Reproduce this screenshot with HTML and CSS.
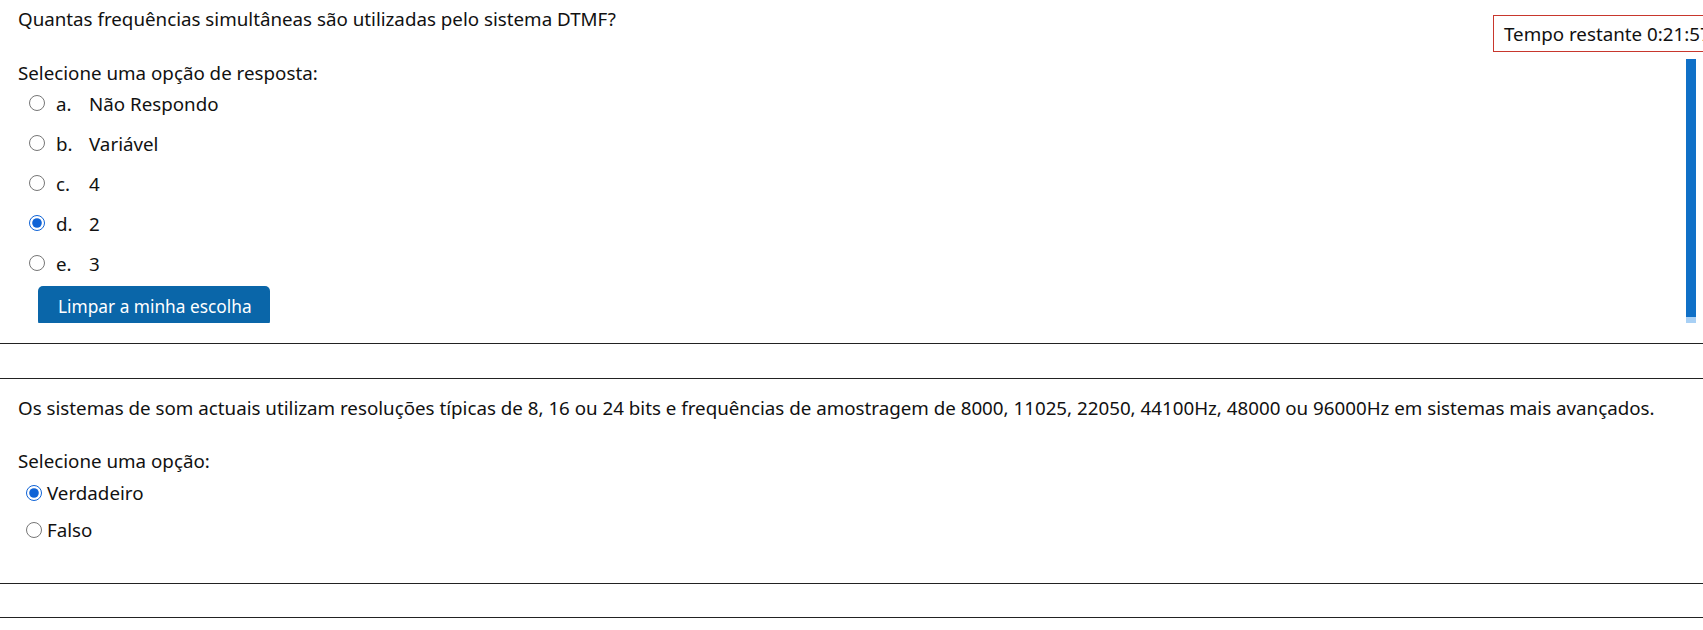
FILE: index.html
```html
<!DOCTYPE html>
<html lang="pt">
<head>
<meta charset="utf-8">
<title>Questionário</title>
<link rel="stylesheet" href="styles.css">
</head>
<body>
<div class="timer">Tempo restante 0:21:57</div>

<section class="que que-first">
  <div class="que-frame">
    <div class="que-content">
      <div class="qtext">Quantas frequências simultâneas são utilizadas pelo sistema DTMF?</div>
      <div class="prompt">Selecione uma opção de resposta:</div>
      <div class="answers">
        <label class="opt"><input type="radio" name="q1"><span class="num">a.</span><span>Não Respondo</span></label>
        <label class="opt"><input type="radio" name="q1"><span class="num">b.</span><span>Variável</span></label>
        <label class="opt"><input type="radio" name="q1"><span class="num">c.</span><span>4</span></label>
        <label class="opt"><input type="radio" name="q1" checked><span class="num">d.</span><span>2</span></label>
        <label class="opt"><input type="radio" name="q1"><span class="num">e.</span><span>3</span></label>
      </div>
      <button class="btn-clear" type="button">Limpar a minha escolha</button>
    </div>
    <div class="scrollbar"><div class="thumb"></div></div>
  </div>
</section>

<section class="que que-second">
  <div class="qtext">Os sistemas de som actuais utilizam resoluções típicas de 8, 16 ou 24 bits e frequências de amostragem de 8000, 11025, 22050, 44100Hz, 48000 ou 96000Hz em sistemas mais avançados.</div>
  <div class="prompt">Selecione uma opção:</div>
  <div class="answers">
    <label class="opt2"><input type="radio" name="q2" checked><span>Verdadeiro</span></label>
    <label class="opt2"><input type="radio" name="q2"><span>Falso</span></label>
  </div>
</section>

<section class="que que-third"></section>
</body>
</html>
```

FILE: styles.css
```css
html, body {
  margin: 0;
  padding: 0;
  overflow: hidden;
  background: #fff;
}

body {
  font-family: "Noto Sans", "Open Sans", sans-serif;
  font-size: 18.75px;
  line-height: 27px;
  color: #111;
  position: relative;
  width: 1703px;
  height: 630px;
}

.timer {
  position: absolute;
  top: 15px;
  left: 1493px;
  padding: 4px 10px;
  border: 1px solid #c8372d;
  background: #fff;
  white-space: nowrap;
}

.que-first {
  padding-bottom: 20px;
  border-bottom: 1px solid #222;
}

.que-frame {
  height: 323px;
  overflow: hidden;
  display: flex;
}

.que-content {
  flex: 1;
  padding: 4.5px 0 0 18px;
}

.qtext {
  margin-bottom: 27px;
}

.opt {
  display: flex;
  align-items: center;
  padding: 4px 0 9px 0;
}

.opt input {
  width: 16px;
  height: 16px;
  margin: 0 11.5px 0 10.5px;
  accent-color: #0f63d6;
}

.num {
  width: 33px;
}

.btn-clear {
  margin: 0.5px 0 0 20px;
  padding: 7px 18px 6px 20px;
  border: 0;
  border-radius: 5px;
  background: #0a66a9;
  color: #fff;
  font-family: inherit;
  font-size: 17.3px;
  line-height: 27px;
}

.scrollbar {
  width: 10px;
  height: 264px;
  margin: 59px 7px 0 0;
  background: #a8d0f5;
}

.thumb {
  height: 258px;
  background: #0f70c7;
}

.que-second {
  margin-top: 34px;
  padding: 15px 0 35px 18px;
  border-top: 1px solid #222;
  border-bottom: 1px solid #222;
}

.que-second .qtext {
  margin-bottom: 26px;
}

.opt2 {
  display: flex;
  align-items: center;
  padding: 5px 0;
}

.opt2 input {
  width: 16px;
  height: 16px;
  margin: 0 5px 0 8px;
  accent-color: #0f63d6;
}

.que-third {
  margin-top: 33px;
  border-top: 1px solid #222;
}
```
